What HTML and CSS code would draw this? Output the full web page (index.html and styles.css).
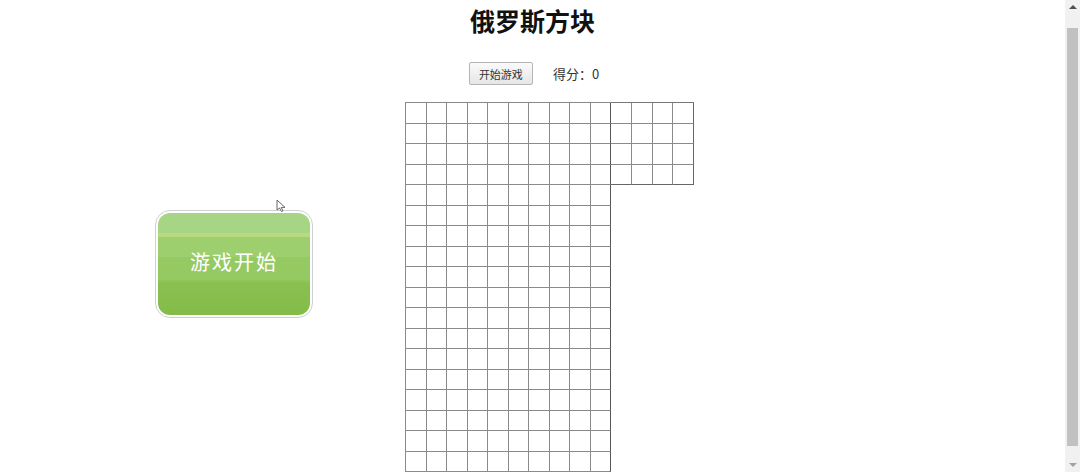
FILE: index.html
```html
<!DOCTYPE html>
<html lang="zh-CN">
<head>
<meta charset="utf-8">
<title>俄罗斯方块</title>
<link rel="stylesheet" href="styles.css">
</head>
<body>
<div class="page">
  <header class="top">
    <h1 class="title">俄罗斯方块</h1>
    <div class="controls">
      <button class="start-btn" type="button">开始游戏</button>
      <span class="score">得分：<span class="score-num">0</span></span>
    </div>
  </header>
  <main class="stage">
    <div class="big-start">
      <div class="big-start-inner">游戏开始</div>
      <svg class="cursor" width="12" height="13" viewBox="0 0 12 13"><path d="M1 1 L1 11 L3.5 9 L5.5 12.5 L7 11.8 L5.2 8.4 L9 8.4 Z" fill="#fff" stroke="#555" stroke-width="0.9"/></svg>
    </div>
    <div class="boards">
      <div class="board" id="main-board"></div>
      <div class="next" id="next-board"></div>
    </div>
  </main>
</div>
<div class="scrollbar">
  <span class="arrow up"></span>
  <span class="thumb"></span>
  <span class="arrow down"></span>
</div>
<script src="script.js"></script>
</body>
</html>
```

FILE: styles.css
```css
html, body {
  margin: 0;
  padding: 0;
  background: #fff;
  font-family: "Noto Sans CJK SC", "Liberation Sans", sans-serif;
  color: #222;
}

.page {
  width: 1065px;
}

.top {
  text-align: center;
}

.title {
  margin: 4px 0 0;
  font-size: 25px;
  line-height: 32px;
  font-weight: bold;
  color: #111;
}

.controls {
  margin-top: 26px;
  height: 23px;
  display: flex;
  justify-content: center;
  align-items: center;
  gap: 20px;
  padding-left: 3px;
}

.start-btn {
  width: 64px;
  height: 23px;
  padding: 0;
  font-family: "Noto Sans CJK SC", sans-serif;
  font-size: 11px;
  color: #333;
  border: 1px solid #b5b5b5;
  border-radius: 2px;
  background: linear-gradient(#fafafa, #e6e6e6);
}

.score {
  font-size: 13px;
  color: #333;
}

.stage {
  display: flex;
  align-items: flex-start;
  margin-top: 17px;
  padding-left: 155px;
}

.big-start {
  position: relative;
  margin-top: 108px;
  width: 152px;
  height: 102px;
  padding: 2px;
  border: 1px solid #cfcfcf;
  border-radius: 15px;
  background: #fff;
}

.big-start-inner {
  box-sizing: border-box;
  height: 100%;
  padding-bottom: 5px;
  border-radius: 12px;
  display: flex;
  align-items: center;
  justify-content: center;
  color: #fff;
  font-size: 20px;
  letter-spacing: 2px;
  background:
    linear-gradient(180deg,
      #a6d585 0px, #a6d585 20px,
      #b8da7e 20px, #b8da7e 24px,
      #9dcf6e 24px, #9dcf6e 44px,
      #95ca63 44px, #95c962 66px,
      #89c050 70px, #84bc48 100%);
}

.cursor {
  position: absolute;
  left: 120px;
  top: -12px;
}

.boards {
  display: flex;
  align-items: flex-start;
  margin-left: 92px;
}

.board {
  display: grid;
  grid-template-columns: repeat(10, 20.5px);
  grid-auto-rows: 20.5px;
  border-left: 1px solid #8a8a8a;
  border-top: 1px solid #8a8a8a;
}

.next {
  display: grid;
  grid-template-columns: repeat(4, 20.75px);
  grid-auto-rows: 20.5px;
  border-top: 1px solid #777;
}

.cell {
  border-right: 1px solid #8a8a8a;
  border-bottom: 1px solid #8a8a8a;
}

.next .cell:nth-child(4n) {
  border-right-color: #666;
}

.next .cell:nth-child(n+13) {
  border-bottom-color: #666;
}

.board .cell:nth-child(10n) {
  border-right-color: #555;
}

.scrollbar {
  position: fixed;
  top: 0;
  right: 0;
  width: 15px;
  height: 100%;
  background: #f1f1f1;
  display: flex;
  flex-direction: column;
  align-items: center;
}

.arrow {
  width: 0;
  height: 0;
  border-left: 4px solid transparent;
  border-right: 4px solid transparent;
}

.arrow.up {
  margin-top: 5px;
  border-bottom: 4px solid #505050;
}

.arrow.down {
  margin-bottom: 5px;
  border-top: 4px solid #a3a3a3;
}

.thumb {
  margin: 19px 0 17px;
  width: 11px;
  flex: 1;
  background: #c1c1c1;
}
```

FILE: script.js
```js
function fill(id, count) {
  var el = document.getElementById(id);
  for (var i = 0; i < count; i++) {
    var c = document.createElement('div');
    c.className = 'cell';
    el.appendChild(c);
  }
}
fill('main-board', 200);
fill('next-board', 16);
```
